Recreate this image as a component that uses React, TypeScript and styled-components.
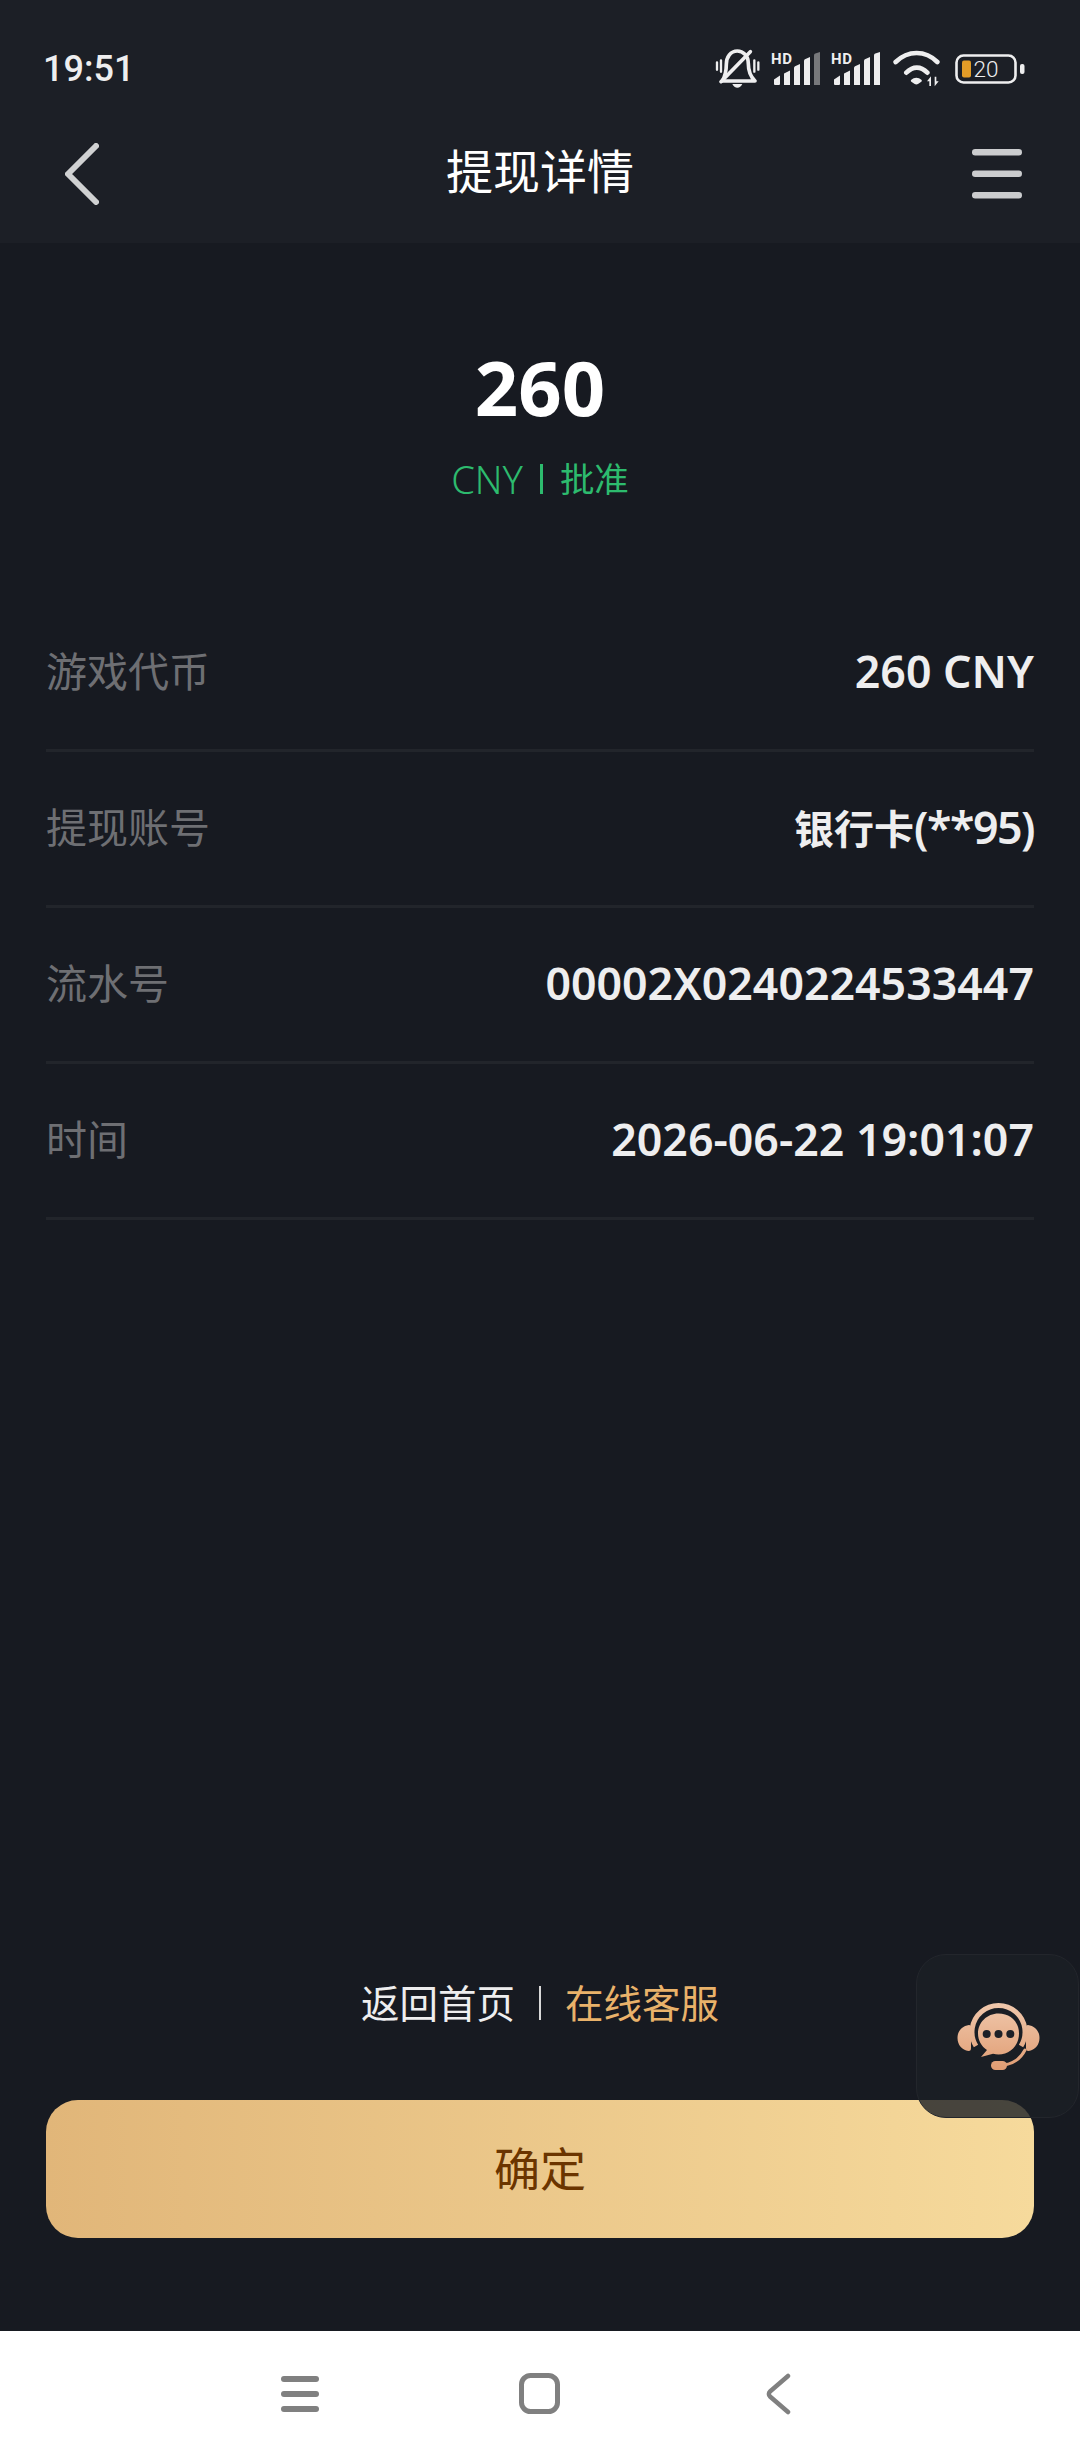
import * as React from "react";
import styled, { createGlobalStyle } from "styled-components";

const GlobalStyle = createGlobalStyle`
  html, body {
    margin: 0;
    padding: 0;
    background: #171a21;
  }
  * {
    box-sizing: border-box;
  }
`;

const fontStack = `"Noto Sans", "Noto Sans CJK SC", sans-serif`;

const Page = styled.div`
  position: relative;
  display: flex;
  flex-direction: column;
  width: 1080px;
  height: 2460px;
  overflow: hidden;
  background: #171a21;
  font-family: ${fontStack};
`;

const TopBar = styled.header`
  flex: none;
  background: #1c1f26;
`;

const StatusBar = styled.div`
  display: flex;
  align-items: center;
  justify-content: space-between;
  height: 71px;
  margin-top: 33px;
  padding: 0 55px 0 43px;
`;

const Clock = styled.span`
  color: #eeeeef;
  font-family: Roboto, sans-serif;
  font-size: 36px;
  font-weight: 500;
`;

const StatusIcons = styled.div`
  display: flex;
  align-items: center;
`;

const SignalSvg = styled.svg`
  margin: -8px 0 0 10px;
`;

const WifiSvg = styled.svg`
  margin-left: 12px;
`;

const BatterySvg = styled.svg`
  margin-left: 14px;
`;

const NavBar = styled.div`
  display: grid;
  grid-template-columns: 1fr auto 1fr;
  align-items: center;
  height: 139px;
  padding: 0 58px;
`;

const NavTitle = styled.h1`
  margin: 0 0 10px;
  color: #ffffff;
  font-size: 47px;
  font-weight: 400;
`;

const NavEnd = styled.div<{ $right?: boolean }>`
  display: flex;
  justify-content: ${(p) => (p.$right ? "flex-end" : "flex-start")};
  padding-left: ${(p) => (p.$right ? "0" : "7px")};
`;

const Main = styled.main`
  flex: 1;
  display: flex;
  flex-direction: column;
  padding: 0 46px 93px;
`;

const Hero = styled.section`
  display: flex;
  flex-direction: column;
  align-items: center;
  height: 353px;
  padding-top: 94px;
`;

const Amount = styled.div`
  color: #ffffff;
  font-size: 76px;
  font-weight: 700;
  line-height: 100px;
`;

const StatusLine = styled.div`
  display: flex;
  align-items: center;
  margin-top: 17px;
  gap: 17px;
  color: #2dbb6e;
  line-height: 50px;
`;

const StatusText = styled.span<{ $latin?: boolean }>`
  font-size: ${(p) => (p.$latin ? "38px" : "34.5px")};
  font-weight: ${(p) => (p.$latin ? 300 : 400)};
`;

const StatusLineDivider = styled.i`
  width: 3px;
  height: 30px;
  background: #2dbb6e;
`;

const Row = styled.div`
  display: flex;
  align-items: center;
  justify-content: space-between;
  height: 156px;
  padding-bottom: 4px;
  border-bottom: 3px solid #22252b;
`;

const RowLabel = styled.span`
  margin-bottom: 3px;
  color: #6e6f73;
  font-size: 41px;
`;

const RowValue = styled.span`
  color: #eeeeef;
  font-size: 44.7px;
  font-weight: 600;
`;

const RowValueCjk = styled.span`
  font-size: 40px;
`;

const RowValueTail = styled.span`
  letter-spacing: -1.5px;
`;

const Footer = styled.footer`
  margin-top: auto;
  display: flex;
  flex-direction: column;
  align-items: center;
`;

const Links = styled.div`
  display: flex;
  align-items: center;
  gap: 24px;
  margin-bottom: 68px;
  font-size: 38.5px;
`;

const LinkText = styled.a<{ $accent?: boolean }>`
  color: ${(p) => (p.$accent ? "#e9b26a" : "#eeeeef")};
  line-height: 58px;
`;

const LinkDivider = styled.i`
  width: 2px;
  height: 34px;
  background: #d8d8d8;
`;

const ConfirmButton = styled.button`
  display: flex;
  align-items: center;
  justify-content: center;
  width: 100%;
  height: 138px;
  padding: 0 0 6px;
  border: 0;
  border-radius: 32px;
  background: linear-gradient(90deg, #e1b679 0%, #f6da9c 100%);
  color: #6b3500;
  font-family: ${fontStack};
  font-size: 46px;
  font-weight: 400;
`;

const SupportBubble = styled.div`
  position: absolute;
  top: 1954px;
  right: 1px;
  display: flex;
  align-items: center;
  justify-content: center;
  width: 163px;
  height: 164px;
  border: 1px solid #23262c;
  border-radius: 30px;
  background: rgba(28, 31, 38, 0.8);
`;

const SystemNav = styled.nav`
  flex: none;
  display: flex;
  align-items: center;
  height: 129px;
  padding: 0 0 4px 281px;
  background: #ffffff;
`;

const NavSlot = styled.span<{ $gap: number }>`
  display: flex;
  margin-right: ${(p) => p.$gap}px;
`;

const BellIcon = () => (
  <svg width="46" height="40" viewBox="28 26 138 120" fill="none" stroke="#eeeeef" strokeLinecap="round" strokeLinejoin="round">
    <path d="M34 66v22M46 60v34M146 60v34M158 66v22" strokeWidth="7" />
    <path d="M50 122h98c-16-16-20-32-20-52 0-24-16-38-33-38-20 0-33 18-33 40 0 20-4 36-12 50z" strokeWidth="11" />
    <path d="M46 124l88-90" strokeWidth="11" />
    <path d="M80 131h30c-3 7-9 11-15 11s-12-4-15-11z" fill="#eeeeef" stroke="none" />
  </svg>
);

const SignalIcon = ({ weak }: { weak?: boolean }) => (
  <SignalSvg width="50" height="42" viewBox="0 -8 50 42">
    <text x="0" y="12" fontFamily="Roboto, sans-serif" fontSize="15" fontWeight="700" letterSpacing="0.6" fill="#eeeeef">HD</text>
    <path d="M3 27.500l6-4V32a1 1 0 0 1-1 1H4a1 1 0 0 1-1-1zM13 21.500l6-3V33h-6zM23 16c0-1 .8-1.800 1.600-2.100L29 12v21h-6zM33 9c0-1 .6-1.700 1.500-2.100L39 5v28h-6z" fill="#eeeeef" />
    <path d="M43 3.500c0-1 .5-1.500 1.300-1.900L49 0v33h-6z" fill={weak ? "#77787b" : "#eeeeef"} />
  </SignalSvg>
);

const WifiIcon = () => (
  <WifiSvg width="48" height="38" viewBox="25 30 144 114" fill="none">
    <path d="M33 66C70 30 122 30 158 66M65 98c20-20 43-20 63 0" stroke="#eeeeef" strokeWidth="14" strokeLinecap="round" />
    <path d="M80 119c8-8 22-8 30 0 2 2 2 4 0 6l-10 7c-3 2-7 2-10 0l-10-7c-2-2-2-4 0-6z" fill="#eeeeef" />
    <path d="M127 124l12-15v29h-5v-14zM162 124l-12 15v-29h5v14z" fill="#eeeeef" />
  </WifiSvg>
);

const BatteryIcon = () => (
  <BatterySvg width="70" height="30" viewBox="0 0 70 30">
    <rect x="1.500" y="1.500" width="59" height="27" rx="7" fill="none" stroke="#eeeeef" strokeWidth="2.600" />
    <rect x="7" y="6.500" width="9" height="17" rx="2" fill="#e39c27" />
    <text x="18.500" y="23" fontFamily="Roboto, sans-serif" fontSize="22.500" fontWeight="300" fill="#eeeeef">20</text>
    <rect x="65" y="10" width="4.500" height="10" rx="2" fill="#eeeeef" />
  </BatterySvg>
);

const BackIcon = () => (
  <svg width="34" height="62" viewBox="0 0 34 62" fill="none">
    <path d="M31 3L3 31l28 28" stroke="#d0d1d2" strokeWidth="6" strokeLinecap="round" strokeLinejoin="round" />
  </svg>
);

const MenuIcon = () => (
  <svg width="50" height="50" viewBox="0 0 50 50" fill="#cbccce">
    <rect x="0" y="0" width="50" height="6.500" rx="3.200" />
    <rect x="0" y="21.500" width="50" height="6.500" rx="3.200" />
    <rect x="0" y="43" width="50" height="6.500" rx="3.200" />
  </svg>
);

const HeadsetIcon = () => (
  <svg width="85" height="72" viewBox="10 5 85 72" fill="none">
    <defs>
      <linearGradient id="hs" gradientUnits="userSpaceOnUse" x1="0" y1="8" x2="0" y2="76">
        <stop offset="0" stopColor="#f0c8ac" />
        <stop offset="1" stopColor="#e09c72" />
      </linearGradient>
    </defs>
    <path d="M31 51a26.500 26.500 0 1 1 45 0" stroke="url(#hs)" strokeWidth="5" />
    <path d="M24 30c-7 1-11.500 6-11.500 13s4.500 12 11 13c2 0 2.500-1 2.500-3V33c0-2-.5-3-2-3zM83 30c7 1 11.500 6 11.500 13s-4.500 12-11 13c-2 0-2.500-1-2.500-3V33c0-2 .5-3 2-3z" fill="url(#hs)" />
    <path d="M53.500 18.500c-11.500 0-20.500 9-20.500 20 0 7 3.500 13 9 16.500l-6 7 12-3.200c2 .5 3.500.7 5.500.7 11.500 0 20.500-9 20.500-21s-9-20-20.500-20z" fill="url(#hs)" />
    <circle cx="41.700" cy="39" r="4" fill="#1d2027" />
    <circle cx="53.500" cy="39" r="4" fill="#1d2027" />
    <circle cx="65.300" cy="39" r="4" fill="#1d2027" />
    <path d="M80 55c-4 8-10 13-20 15" stroke="url(#hs)" strokeWidth="3" strokeLinecap="round" />
    <rect x="46" y="66" width="16" height="9" rx="4.500" fill="url(#hs)" />
  </svg>
);

const NavMenuIcon = () => (
  <svg width="38" height="36" viewBox="0 0 38 36" fill="#808080">
    <rect x="0" y="0" width="38" height="6" rx="3" />
    <rect x="0" y="15" width="38" height="6" rx="3" />
    <rect x="0" y="30" width="38" height="6" rx="3" />
  </svg>
);

const NavHomeIcon = () => (
  <svg width="41" height="41" viewBox="0 0 41 41" fill="none">
    <rect x="2.500" y="2.500" width="36" height="36" rx="9" stroke="#808080" strokeWidth="5" />
  </svg>
);

const NavBackIcon = () => (
  <svg width="25" height="42" viewBox="0 0 25 42" fill="none">
    <path d="M22 3L4 18.500c-1.500 1.300-1.500 3.700 0 5L22 39" stroke="#808080" strokeWidth="4.500" strokeLinecap="round" />
  </svg>
);

const App: React.FC = () => {
  return (
    <Page>
      <GlobalStyle />
      <TopBar>
        <StatusBar>
          <Clock>19:51</Clock>
          <StatusIcons>
            <BellIcon />
            <SignalIcon weak />
            <SignalIcon />
            <WifiIcon />
            <BatteryIcon />
          </StatusIcons>
        </StatusBar>
        <NavBar>
          <NavEnd>
            <BackIcon />
          </NavEnd>
          <NavTitle>提现详情</NavTitle>
          <NavEnd $right>
            <MenuIcon />
          </NavEnd>
        </NavBar>
      </TopBar>
      <Main>
        <Hero>
          <Amount>260</Amount>
          <StatusLine>
            <StatusText $latin>CNY</StatusText>
            <StatusLineDivider />
            <StatusText>批准</StatusText>
          </StatusLine>
        </Hero>
        <Row>
          <RowLabel>游戏代币</RowLabel>
          <RowValue>260 CNY</RowValue>
        </Row>
        <Row>
          <RowLabel>提现账号</RowLabel>
          <RowValue>
            <RowValueCjk>银行卡</RowValueCjk>
            <RowValueTail>(**95)</RowValueTail>
          </RowValue>
        </Row>
        <Row>
          <RowLabel>流水号</RowLabel>
          <RowValue>00002X0240224533447</RowValue>
        </Row>
        <Row>
          <RowLabel>时间</RowLabel>
          <RowValue>2026-06-22 19:01:07</RowValue>
        </Row>
        <Footer>
          <Links>
            <LinkText>返回首页</LinkText>
            <LinkDivider />
            <LinkText $accent>在线客服</LinkText>
          </Links>
          <ConfirmButton>确定</ConfirmButton>
        </Footer>
      </Main>
      <SupportBubble>
        <HeadsetIcon />
      </SupportBubble>
      <SystemNav>
        <NavSlot $gap={200}>
          <NavMenuIcon />
        </NavSlot>
        <NavSlot $gap={206}>
          <NavHomeIcon />
        </NavSlot>
        <NavBackIcon />
      </SystemNav>
    </Page>
  );
};

export default App;
